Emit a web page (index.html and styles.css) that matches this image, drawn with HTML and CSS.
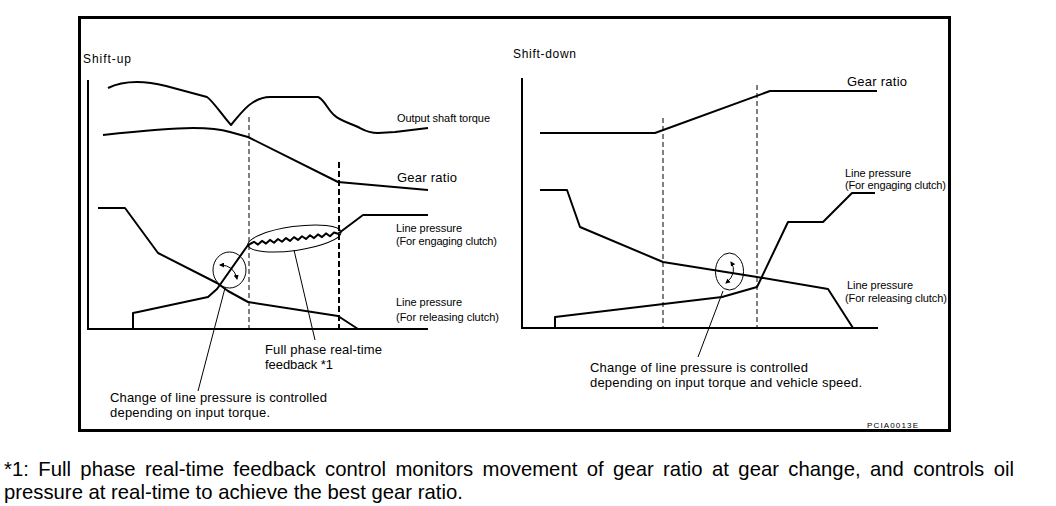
FILE: index.html
```html
<!DOCTYPE html>
<html lang="en">
<head>
<meta charset="utf-8">
<title>Shift-up / Shift-down line pressure control</title>
<link rel="stylesheet" href="styles.css">
</head>
<body>
<div class="figure">
<svg class="chart" width="867" height="410" viewBox="81 19 867 410" xmlns="http://www.w3.org/2000/svg">
  <defs>
    <marker id="ah" viewBox="0 0 10 10" refX="8" refY="5" markerWidth="5" markerHeight="5" orient="auto-start-reverse" markerUnits="strokeWidth">
      <path d="M0,0 L10,5 L0,10 z" fill="#000"/>
    </marker>
  </defs>

  <!-- ===== Shift-up ===== -->
  <g class="axes">
    <line x1="88" y1="80" x2="88" y2="330"/>
    <line x1="87" y1="329" x2="428" y2="329"/>
  </g>
  <line class="dash thin" x1="249" y1="117" x2="249" y2="328"/>
  <line class="dash thick" x1="339" y1="162" x2="339" y2="328"/>

  <path class="curve" d="M108,88 C118,83 128,82 137,82 C148,82 158,84 166,86 L207,97 C213,101 222,115 231,125 C238,117 244,108 252,103 C258,99 264,97 270,97 L318,97 C324,99 328,110 334,115 C340,121 350,123 358,127 C364,130 368,133 378,133 L395,132 L428,128"/>
  <path class="curve" d="M103,135 C140,131 170,128 193,128 C210,128 220,129 230,132 L248,137 L338,182 L428,190"/>
  <path class="curve" d="M98,208 L125,208 L158,253 L217,283 L228,291 L248,302 L338,316 L358,329 L428,329"/>
  <path class="curve" d="M133,329 L133,313 L138,312 L208,297 L217,289 L248,245 L250,244 L254,241.8 L258,244.6 L262,240.9 L266,243.6 L270,239.9 L274,242.7 L278,239 L282,241.8 L286,238.1 L290,240.9 L294,237.1 L298,239.9 L302,236.2 L306,239 L310,235.3 L314,238.1 L318,234.4 L322,237.1 L326,233.4 L330,236.2 L334,232.5 L338,233.8 L363,215 L428,215"/>

  <ellipse class="thin-line" cx="294.5" cy="238.5" rx="47" ry="12" transform="rotate(-8 294.5 238.5)"/>
  <ellipse class="thin-line" cx="229.5" cy="270" rx="16.5" ry="18"/>
  <path class="thin-line" d="M220,265 Q234,265 237,279" marker-start="url(#ah)" marker-end="url(#ah)"/>
  <line class="thin-line" x1="294" y1="250" x2="315" y2="340"/>
  <line class="thin-line" x1="225" y1="288" x2="198" y2="391"/>

  <text class="lbl-title" x="83" y="63" textLength="48" lengthAdjust="spacing">Shift-up</text>
  <text class="lbl-sm" x="397" y="122" textLength="93" lengthAdjust="spacing">Output shaft torque</text>
  <text class="lbl-md" x="397" y="182" textLength="60" lengthAdjust="spacing">Gear ratio</text>
  <text class="lbl-sm" x="396" y="232" textLength="66" lengthAdjust="spacing">Line pressure</text>
  <text class="lbl-sm" x="396" y="245" textLength="101" lengthAdjust="spacing">(For engaging clutch)</text>
  <text class="lbl-sm" x="396" y="306" textLength="66" lengthAdjust="spacing">Line pressure</text>
  <text class="lbl-sm" x="396" y="321" textLength="103" lengthAdjust="spacing">(For releasing clutch)</text>
  <text class="lbl-note" x="265" y="354" textLength="117" lengthAdjust="spacing">Full phase real-time</text>
  <text class="lbl-note" x="265" y="369" textLength="68" lengthAdjust="spacing">feedback *1</text>
  <text class="lbl-note" x="110" y="402" textLength="217" lengthAdjust="spacing">Change of line pressure is controlled</text>
  <text class="lbl-note" x="110" y="417" textLength="160" lengthAdjust="spacing">depending on input torque.</text>

  <!-- ===== Shift-down ===== -->
  <g class="axes">
    <line x1="522" y1="78" x2="522" y2="329"/>
    <line x1="521" y1="328" x2="878" y2="328"/>
  </g>
  <line class="dash thin" x1="663" y1="118" x2="663" y2="327"/>
  <line class="dash thin" x1="757" y1="85" x2="757" y2="327"/>

  <path class="curve" d="M540,133 L655,133 L770,91 L877,91"/>
  <path class="curve" d="M555,328 L555,317 L722,297 L757,287 L788,222 L823,222 L852,193 L875,193"/>
  <path class="curve" d="M540,190 L567,190 L580,227 L663,262 L757,277 L828,289 L853,328"/>

  <ellipse class="thin-line" cx="729.5" cy="271.5" rx="14" ry="18.5"/>
  <path class="thin-line" d="M731,262 Q738,273 726,283" marker-start="url(#ah)" marker-end="url(#ah)"/>
  <line class="thin-line" x1="723" y1="291" x2="698" y2="357"/>

  <text class="lbl-title" x="513" y="58" textLength="63" lengthAdjust="spacing">Shift-down</text>
  <text class="lbl-md" x="847" y="86" textLength="60" lengthAdjust="spacing">Gear ratio</text>
  <text class="lbl-sm" x="845" y="177" textLength="66" lengthAdjust="spacing">Line pressure</text>
  <text class="lbl-sm" x="845" y="189" textLength="101" lengthAdjust="spacing">(For engaging clutch)</text>
  <text class="lbl-sm" x="847" y="289" textLength="66" lengthAdjust="spacing">Line pressure</text>
  <text class="lbl-sm" x="845" y="302" textLength="102" lengthAdjust="spacing">(For releasing clutch)</text>
  <text class="lbl-note" x="590" y="372" textLength="218" lengthAdjust="spacing">Change of line pressure is controlled</text>
  <text class="lbl-note" x="590" y="387" textLength="272" lengthAdjust="spacing">depending on input torque and vehicle speed.</text>
  <text class="lbl-code" x="867" y="428" textLength="51" lengthAdjust="spacing">PCIA0013E</text>
</svg>
</div>
<p class="footnote">*1: Full phase real-time feedback control monitors movement of gear ratio at gear change, and controls oil pressure at real-time to achieve the best gear ratio.</p>
</body>
</html>
```

FILE: styles.css
```css
html, body {
  margin: 0;
  padding: 0;
  background: #fff;
  color: #000;
}

body {
  width: 1056px;
  height: 506px;
  overflow: hidden;
  font-family: "Liberation Sans", Arial, sans-serif;
}

.figure {
  margin: 16px 0 0 78px;
  width: 867px;
  height: 410px;
  border: 3px solid #000;
}

.chart {
  display: block;
}

.chart text {
  font-family: "Liberation Sans", Arial, sans-serif;
  fill: #000;
}

.chart .lbl-title { font-size: 12px; }
.chart .lbl-sm { font-size: 11px; }
.chart .lbl-md { font-size: 13px; }
.chart .lbl-note { font-size: 13px; }
.chart .lbl-code { font-size: 8px; }

.chart .axes line {
  stroke: #000;
  stroke-width: 2;
}

.chart .curve {
  fill: none;
  stroke: #000;
  stroke-width: 2;
  stroke-linejoin: round;
}

.chart .dash {
  stroke: #000;
  stroke-dasharray: 5 3;
}

.chart .dash.thin { stroke-width: 1; }
.chart .dash.thick { stroke-width: 2; stroke-dasharray: 6 3; }

.chart .thin-line {
  fill: none;
  stroke: #000;
  stroke-width: 1;
}

.footnote {
  margin: 26px 0 0 0;
  padding: 0 42px 0 4px;
  font-size: 20.3px;
  line-height: 23px;
  text-align: justify;
}
```
